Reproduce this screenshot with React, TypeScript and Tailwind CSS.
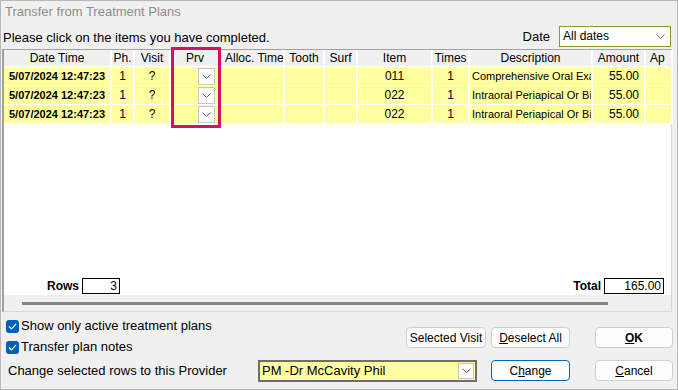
import type { ReactNode } from 'react';

const cols = [
  { label: 'Date Time', w: 'w-[108px]' },
  { label: 'Ph.', w: 'w-[23px]' },
  { label: 'Visit', w: 'w-[36px]' },
  { label: 'Prv', w: 'w-[50px]' },
  { label: 'Alloc. Time', w: 'w-[64px]' },
  { label: 'Tooth', w: 'w-[40px]' },
  { label: 'Surf', w: 'w-[33px]' },
  { label: 'Item', w: 'w-[75px]' },
  { label: 'Times', w: 'w-[37px]' },
  { label: 'Description', w: 'w-[123px]' },
  { label: 'Amount', w: 'w-[53px]' },
  { label: 'Ap', w: 'w-[27px]' },
];

const rows = [
  { item: '011', desc: 'Comprehensive Oral Exa' },
  { item: '022', desc: 'Intraoral Periapical Or Bit' },
  { item: '022', desc: 'Intraoral Periapical Or Bit' },
];

function Chevron({ className = '' }: { className?: string }) {
  return (
    <svg width="9" height="5" viewBox="0 0 9 5" className={className}>
      <path d="M0.5 0.5 L4.5 4.5 L8.5 0.5" fill="none" stroke="#666" strokeWidth="1" />
    </svg>
  );
}

function Check() {
  return (
    <span className="w-[13px] h-[13px] rounded-[3px] bg-[#005fb8] flex items-center justify-center">
      <svg width="9" height="7" viewBox="0 0 9 7">
        <path d="M1 3.5 L3.5 6 L8 1" fill="none" stroke="#fff" strokeWidth="1.2" />
      </svg>
    </span>
  );
}

function Btn({ children, focus, className = '' }: { children: ReactNode; focus?: boolean; className?: string }) {
  return (
    <button
      className={`h-[21px] shrink-0 rounded-[4px] bg-[#fdfdfd] text-[12px] text-black flex items-center justify-center ${
        focus ? 'border border-[#0067c0]' : 'border border-[#d0d0d0]'
      } ${className}`}
    >
      {children}
    </button>
  );
}

function Cell({ w, children, className = '' }: { w: string; children?: ReactNode; className?: string }) {
  return (
    <div className={`${w} h-[19px] shrink-0 border-r-2 border-b border-white bg-[#ffffa0] flex items-center ${className}`}>
      {children}
    </div>
  );
}

export default function App() {
  return (
    <div
      className="w-[678px] h-[390px] bg-[#f0f0f0] border border-[#b8b8b8] text-black relative overflow-hidden"
      style={{ fontFamily: '"Liberation Sans", Arial, sans-serif' }}
    >
      <div className="h-[22px] pl-[4px] flex items-center text-[13px] text-[#8c8c8c]">Transfer from Treatment Plans</div>

      <div className="h-[26px] flex items-center pl-[2px] pr-[6px]">
        <span className="text-[13px] mt-[3px]">Please click on the items you have completed.</span>
        <span className="ml-auto text-[13px] mr-[9px] mt-[2px]">Date</span>
        <div className="w-[112px] h-[21px] bg-white border border-[#9c8f3c] flex items-center pl-[3px] pr-[5px] text-[12px]">
          All dates
          <Chevron className="ml-auto" />
        </div>
      </div>

      {/* grid panel */}
      <div className="ml-[1px] mr-[5px] h-[263px] border-l-2 border-t border-[#a0a0a0] border-r border-r-[#d8d8d8] border-b border-b-[#d8d8d8] flex flex-col">
        <div className="bg-white flex-1 flex flex-col">
          <div className="flex h-[17px] border-b border-white bg-[#f0f0f0]">
            {cols.map(c => (
              <div
                key={c.label}
                className={`${c.w} shrink-0 border-r-2 border-white text-[12px] flex items-center overflow-hidden whitespace-nowrap ${
                  c.label === 'Alloc. Time' || c.label === 'Ap' ? 'pl-[4px]' : 'justify-center'
                }`}
              >
                {c.label}
              </div>
            ))}
          </div>
          {rows.map((r, i) => (
            <div key={i} className="flex text-[12px]">
              <Cell w="w-[108px]" className="justify-center font-bold text-[11px]">5/07/2024 12:47:23</Cell>
              <Cell w="w-[23px]" className="justify-center">1</Cell>
              <Cell w="w-[36px]" className="justify-center">?</Cell>
              <Cell w="w-[50px]" className="pl-[21px] pr-[4px]">
                <span className="w-[17px] h-[17px] bg-white border border-[#c8c8c8] flex items-center justify-center ml-auto">
                  <Chevron />
                </span>
              </Cell>
              <Cell w="w-[64px]" />
              <Cell w="w-[40px]" />
              <Cell w="w-[33px]" />
              <Cell w="w-[75px]" className="justify-center">{r.item}</Cell>
              <Cell w="w-[37px]" className="justify-center">1</Cell>
              <Cell w="w-[123px]" className="pl-[2px] overflow-hidden whitespace-nowrap text-[11px]">{r.desc}</Cell>
              <Cell w="w-[53px]" className="justify-end pr-[5px]">55.00</Cell>
              <Cell w="w-[27px]" />
            </div>
          ))}

          <div className="mt-auto flex items-center h-[17px] mb-[1px] text-[12px]">
            <span className="font-bold ml-[43px] mr-[3px]">Rows</span>
            <span className="w-[38px] h-[16px] border border-black bg-white flex items-center justify-end pr-[2px]">3</span>
            <span className="font-bold ml-auto mr-[3px]">Total</span>
            <span className="w-[60px] h-[16px] border border-black bg-white flex items-center justify-end pr-[2px] mr-[7px]">
              165.00
            </span>
          </div>
        </div>
        <div className="h-[16px] bg-[#f0f0f0] flex items-center">
          <div className="ml-[18px] w-[586px] h-[3px] bg-[#858585]" />
        </div>
      </div>

      {/* bottom controls */}
      <div className="pl-[5px] pr-[4px] pt-[4px] text-[13px]">
        <div className="flex">
          <div className="flex flex-col">
            <label className="flex items-center gap-[2px] h-[20px]">
              <Check />
              Show only active treatment plans
            </label>
            <label className="flex items-center gap-[2px] h-[20px] mt-[1px]">
              <Check />
              Transfer plan notes
            </label>
          </div>
          <div className="ml-auto flex mt-[11px]">
            <Btn className="w-[80px]">Selected Visit</Btn>
            <Btn className="w-[79px] ml-[5px]">
              <span className="underline">D</span>eselect All
            </Btn>
            <Btn className="w-[78px] ml-[25px] font-bold">
              <span className="underline">O</span>K
            </Btn>
          </div>
        </div>
        <div className="flex items-center h-[27px]">
          <span className="ml-[2px] w-[250px]">Change selected rows to this Provider</span>
          <div className="w-[219px] h-[22px] bg-[#ffffa0] border-2 border-[#6e6e6e] flex items-center pl-[2px] pr-[1px]">
            PM -Dr McCavity Phil
            <span className="ml-auto w-[16px] h-[16px] bg-white border border-[#c8c8c8] flex items-center justify-center">
              <Chevron />
            </span>
          </div>
          <Btn focus className="w-[79px] ml-auto">
            C<span className="underline">h</span>ange
          </Btn>
          <Btn className="w-[78px] ml-[25px]">
            <span className="underline">C</span>ancel
          </Btn>
        </div>
      </div>

      {/* highlight around Prv column */}
      <div className="absolute left-[170px] top-[46px] w-[50px] h-[81px] border-[3px] border-[#d4145a] pointer-events-none" />
    </div>
  );
}
